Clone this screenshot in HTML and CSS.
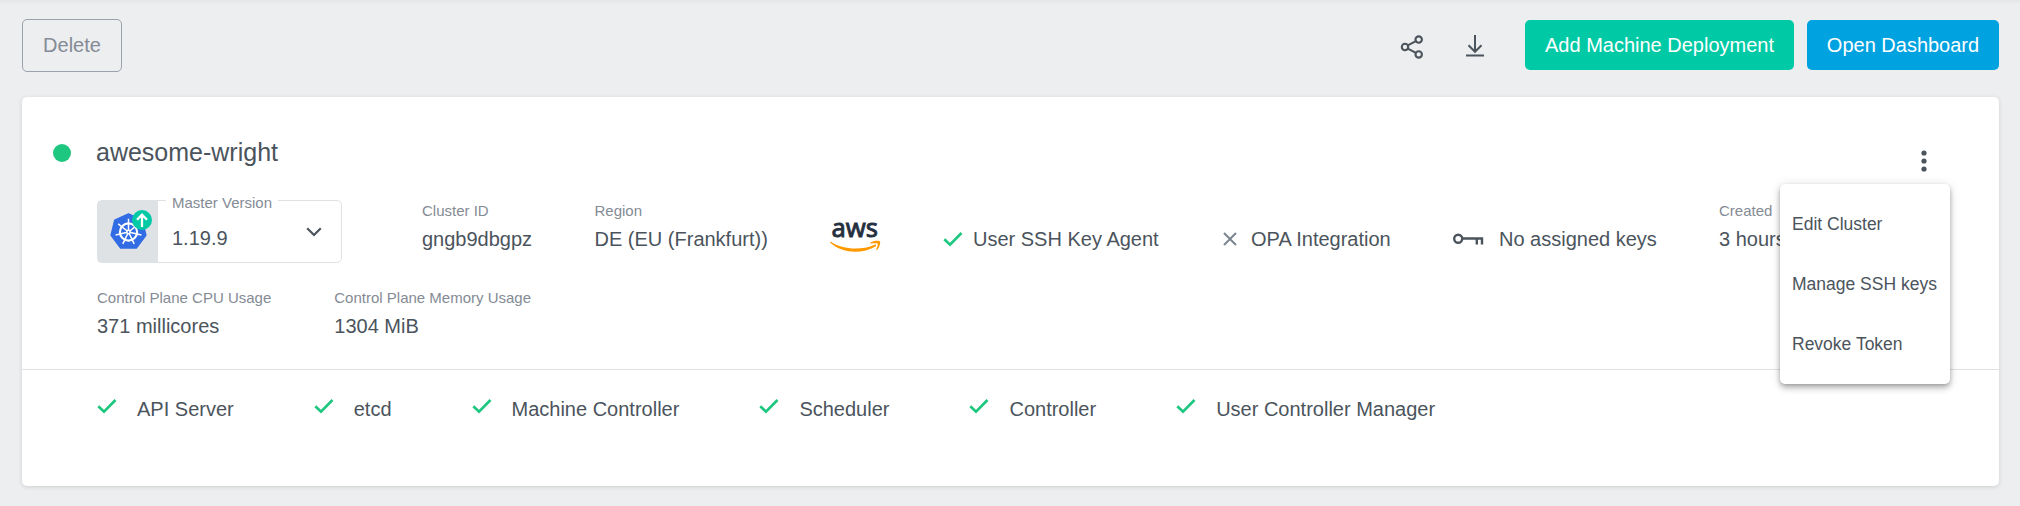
FILE: index.html
```html
<!DOCTYPE html>
<html lang="en">
<head>
<meta charset="utf-8">
<title>Cluster awesome-wright</title>
<link rel="stylesheet" href="styles.css">
</head>
<body>
<svg class="defs" width="0" height="0"><defs>
<symbol id="check" viewBox="0 0 20 16"><path d="M1.3 8.300 7 13.700 18.500 2" fill="none" stroke="#1ec77f" stroke-width="2.700"/></symbol>
</defs></svg>
<header class="toolbar">
  <button class="btn btn-outline">Delete</button>
  <div class="actions">
    <svg class="icon-share" width="24" height="24" viewBox="0 0 24 24" fill="none" stroke="#4b545c" stroke-width="2.100"><circle cx="5" cy="12" r="3.200"/><circle cx="18.700" cy="4.600" r="3.200"/><circle cx="18.700" cy="19.400" r="3.200"/><path d="M7.800 10.400 15.900 6.100M7.800 13.600l8.100 4.300"/></svg>
    <svg class="icon-download" width="20" height="22" viewBox="0 0 20 22" fill="none" stroke="#4b545c" stroke-width="2"><path d="M10 0v16M3.500 10.300 10 16.800l6.500-6.500M1 20.500h18"/></svg>
    <button class="btn btn-green">Add Machine Deployment</button>
    <button class="btn btn-blue">Open Dashboard</button>
  </div>
</header>
<main class="card">
  <div class="title-row">
    <span class="status"></span>
    <h1 class="name">awesome-wright</h1>
    <div class="more">
      <svg width="6" height="22" viewBox="0 0 6 22" fill="#4b545c"><circle cx="3" cy="3" r="2.600"/><circle cx="3" cy="11" r="2.600"/><circle cx="3" cy="19" r="2.600"/></svg>
      <div class="menu">
        <div class="menu-item">Edit Cluster</div>
        <div class="menu-item">Manage SSH keys</div>
        <div class="menu-item">Revoke Token</div>
      </div>
    </div>
  </div>
  <div class="info-row">
    <div class="version">
      <div class="version-logo">
        <svg width="60" height="61" viewBox="0 0 60 61"><path d="M30.500 13 44.200 19.300 47.800 34.200 38.300 46.900H22.700L13.200 34.200 16.800 19.300Z" fill="#326ce5" stroke="#326ce5" stroke-width="1.600" stroke-linejoin="round"/><g fill="none" stroke="#fff"><circle cx="30.500" cy="31" r="8.600" stroke-width="2.100"/><path d="M30.500 17.800V31M30.500 31 40.800 22.800M30.500 31l12.900 2.900M30.500 31l5.700 11.900M30.500 31l-5.700 11.900M30.500 31l-12.900 2.900M30.500 31 20.200 22.800" stroke-width="1.500"/></g><circle cx="30.500" cy="31" r="2.400" fill="#fff"/><circle cx="30.500" cy="31" r=".9" fill="#326ce5"/><circle cx="44" cy="19" r="10" fill="#00caa5"/><path d="M44 26V14M39 18.700 44 13.700l5 5" fill="none" stroke="#fff" stroke-width="2.300"/></svg>
      </div>
      <div class="version-value">1.19.9</div>
      <svg class="chevron" width="16" height="10" viewBox="0 0 16 10"><path d="M1.200 1.300 8 8l6.800-6.700" fill="none" stroke="#4b545c" stroke-width="2.200"/></svg>
      <span class="version-label">Master Version</span>
    </div>
    <div class="prop prop-id"><div class="label">Cluster ID</div><div class="value">gngb9dbgpz</div></div>
    <div class="prop prop-region"><div class="label">Region</div><div class="value">DE (EU (Frankfurt))</div></div>
    <svg class="aws" width="52" height="44" viewBox="0 -10 52 44"><text x="1.500" y="17" class="aws-text" textLength="46.500" lengthAdjust="spacingAndGlyphs">aws</text><path d="M.8 21.800C12 29.500 31 30.800 44.500 24.700c1.300-.5 2.300.8 1 1.700C32 34.500 12 33.500.3 22.800c-.5-.6-.1-1.300.5-1z" fill="#f90"/><path d="M40.500 22.500c3-2.200 8.400-2 9.400-1.200.9 1.100-.3 6.300-3 8.700-.5.400-.9.200-.7-.3.700-1.700 2.100-5 1.500-5.900-.7-.8-4.600-.4-6.600-.2-.8.100-.9-.6-.6-1.100z" fill="#f90"/></svg>
    <div class="flag flag-ssh"><svg width="20" height="16"><use href="#check"/></svg>User SSH Key Agent</div>
    <div class="flag flag-opa"><svg width="14" height="14" viewBox="0 0 14 14"><path d="M1 1l12 12M13 1 1 13" stroke="#7b8590" stroke-width="2"/></svg>OPA Integration</div>
    <div class="flag flag-keys"><svg width="31" height="12" viewBox="0 0 31 12" fill="none" stroke="#4b545c"><circle cx="5.200" cy="5.800" r="4" stroke-width="2.400"/><path d="M9 5.500H29V11.500M23.800 5.500V11.500" stroke-width="2.400"/></svg>No assigned keys</div>
    <div class="prop prop-created"><div class="label">Created</div><div class="value">3 hours ago</div></div>
  </div>
  <div class="usage-row">
    <div class="prop"><div class="label">Control Plane CPU Usage</div><div class="value">371 millicores</div></div>
    <div class="prop"><div class="label">Control Plane Memory Usage</div><div class="value">1304 MiB</div></div>
  </div>
  <div class="health">
    <div class="health-item"><svg width="20" height="16"><use href="#check"/></svg>API Server</div>
    <div class="health-item"><svg width="20" height="16"><use href="#check"/></svg>etcd</div>
    <div class="health-item"><svg width="20" height="16"><use href="#check"/></svg>Machine Controller</div>
    <div class="health-item"><svg width="20" height="16"><use href="#check"/></svg>Scheduler</div>
    <div class="health-item"><svg width="20" height="16"><use href="#check"/></svg>Controller</div>
    <div class="health-item"><svg width="20" height="16"><use href="#check"/></svg>User Controller Manager</div>
  </div>
</main>
</body>
</html>
```
FILE: styles.css
```css
* { box-sizing: border-box; }
body {
  margin: 0;
  width: 2020px;
  height: 506px;
  overflow: hidden;
  background: linear-gradient(#e4e6e8, #edeef0 5px);
  color: #4b545c;
  font: 20px/24px "Liberation Sans", Arial, sans-serif;
  white-space: nowrap;
}
.defs { display: block; height: 0; }
svg { display: block; flex: none; }
.toolbar { display: flex; align-items: flex-start; justify-content: space-between; height: 97px; padding: 19px 21px 0 22px; }
.btn { font: inherit; border: 0; border-radius: 5px; padding: 0 0 1px; height: 50px; color: #fff; }
.btn-outline { width: 100px; height: 53px; border: 1px solid #9ba2ab; background: transparent; color: #848b95; padding-bottom: 2px; }
.actions { display: flex; align-items: center; padding-top: 1px; }
.icon-share { margin-right: 41px; margin-top: 3px; }
.icon-download { margin-right: 40px; margin-top: 2px; }
.btn-green { width: 269px; background: #00caa5; margin-right: 13px; }
.btn-blue { width: 192px; background: #00a2df; }
.card { width: 1977px; height: 389px; margin-left: 22px; background: #fff; border-radius: 5px; box-shadow: 0 1px 4px rgba(75, 84, 92, .2); }
.title-row { display: flex; align-items: center; height: 103px; padding: 9px 72px 0 31px; }
.status { width: 18px; height: 18px; border-radius: 50%; background: #1ec77f; }
.name { margin: 0 auto 2px 25px; font-size: 25px; line-height: 30px; font-weight: 400; }
.more { position: relative; margin-top: 16px; }
.menu { position: absolute; z-index: 2; top: 34px; right: -23px; width: 170px; height: 200px; padding: 10px 12px; border-radius: 5px; background: #fff; box-shadow: 0 2px 5px -1px rgba(0, 0, 0, .3), 0 5px 6px rgba(0, 0, 0, .14), 0 1px 12px rgba(0, 0, 0, .12); }
.menu-item { height: 60px; font-size: 17.5px; line-height: 60px; }
.info-row { display: flex; height: 86px; padding-left: 75px; }
.version { position: relative; display: flex; width: 245px; height: 63px; border: 1px solid #dfe2e5; border-radius: 5px; }
.version-logo { width: 60px; background: #dfe2e5; }
.version-value { width: 134px; padding: 25px 0 0 14px; }
.chevron { margin: 26px 0 0 14px; }
.version-label { position: absolute; top: -7px; left: 68px; padding: 0 6px; background: #fff; color: #848b95; font-size: 15px; line-height: 18px; }
.label { color: #848b95; font-size: 15px; line-height: 18px; }
.value { margin-top: 7px; }
.prop-id { width: 172px; margin: 2px 0 0 80px; }
.prop-region { width: 236px; margin-top: 2px; padding-left: .5px; }
.aws { margin-top: 10px; }
.aws-text { font: 400 26px "Noto Sans", "Open Sans", sans-serif; fill: #252f3e; stroke: #252f3e; stroke-width: .9px; }
.flag { display: flex; align-items: center; height: 24px; margin-top: 27px; gap: 11px; }
.flag-ssh { width: 280px; margin-left: 61px; gap: 10px; }
.flag-opa { width: 230px; gap: 14px; }
.flag-keys { width: 266px; gap: 15px; }
.prop-created { margin-top: 2px; }
.usage-row { display: flex; gap: 63px; height: 83px; padding: 3px 0 0 75px; }
.usage-row .value { margin-top: 7px; }
.health { display: flex; gap: 80px; padding: 27px 0 0 75px; border-top: 1px solid #dfe2e5; }
.health-item { display: flex; gap: 20px; }
.health-item svg { margin-top: 1px; }
```
